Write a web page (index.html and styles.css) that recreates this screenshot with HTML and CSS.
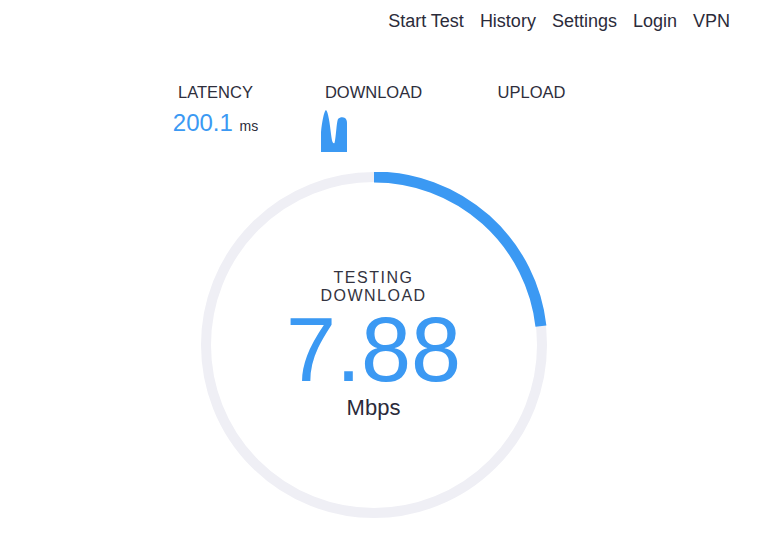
FILE: index.html
```html
<!DOCTYPE html>
<html lang="en">
<head>
    <meta charset="UTF-8">
    <meta name="viewport" content="width=device-width, initial-scale=1.0">
    <title>Speed Test</title>
    <link rel="stylesheet" href="styles.css">
</head>
<body>
    <nav class="top-nav">
        <a href="#">Start Test</a>
        <a href="#">History</a>
        <a href="#">Settings</a>
        <a href="#">Login</a>
        <a href="#">VPN</a>
    </nav>

    <main class="main">
        <div class="stats">
            <div class="stat">
                <div class="stat-title">LATENCY</div>
                <div class="stat-value">200.1 <span class="unit">ms</span></div>
            </div>
            <div class="stat">
                <div class="stat-title">DOWNLOAD</div>
                <div class="stat-chart">
                    <svg width="26" height="42" viewBox="0 0 26 42">
                        <path d="M0 42 L0 22 C1 12 3 1 5 0 C7 1 9 14 10 24 C11 32 12 34 13.5 33 C15 28 15.5 12 17 9 C19 7 22 7 24 8 C25.5 9 26 11 26 13 L26 42 Z" fill="#3b99f3"/>
                    </svg>
                </div>
            </div>
            <div class="stat">
                <div class="stat-title">UPLOAD</div>
            </div>
        </div>

        <div class="gauge">
            <svg class="gauge-ring" width="346" height="346" viewBox="0 0 346 346">
                <circle cx="173" cy="173" r="168" fill="none" stroke="#efeff5" stroke-width="10"/>
                <circle cx="173" cy="173" r="168" fill="none" stroke="#3b99f3" stroke-width="11"
                        pathLength="100" stroke-dasharray="23.2 100" transform="rotate(-90 173 173)"/>
            </svg>
            <div class="gauge-text">
                <div class="gauge-label">TESTING<br>DOWNLOAD</div>
                <div class="gauge-number">7.88</div>
                <div class="gauge-unit">Mbps</div>
            </div>
        </div>
    </main>
</body>
</html>
```

FILE: styles.css
```css
body {
    margin: 0;
    font-family: 'Liberation Sans', Arial, sans-serif;
    color: #2b2b3a;
    background-color: #fff;
}

.top-nav {
    display: flex;
    justify-content: flex-end;
    gap: 16px;
    padding: 10px 45px 0;
    font-size: 18px;
    line-height: 22px;
}

.top-nav a {
    color: #2b2b3a;
    text-decoration: none;
}

.main {
    width: 747px;
    display: flex;
    flex-direction: column;
    align-items: center;
}

.stats {
    display: grid;
    grid-template-columns: repeat(3, 158px);
    margin-top: 50px;
    height: 90px;
}

.stat {
    display: flex;
    flex-direction: column;
    align-items: center;
}

.stat-title {
    font-size: 16.5px;
    line-height: 20px;
    color: #2e2e3c;
}

.stat-value {
    margin-top: 7px;
    font-size: 24px;
    line-height: 28px;
    color: #3b99f3;
}

.stat-value .unit {
    font-size: 14px;
    color: #2b2b3a;
}

.stat-chart {
    align-self: flex-start;
    margin-top: 8px;
    padding-left: 26px;
    height: 42px;
}

.stat-chart svg {
    display: block;
}

.gauge {
    display: grid;
    width: 346px;
    height: 346px;
}

.gauge-ring,
.gauge-text {
    grid-area: 1 / 1;
}

.gauge-text {
    padding-top: 97px;
    text-align: center;
}

.gauge-label {
    font-size: 16px;
    line-height: 18px;
    letter-spacing: 1.5px;
    color: #333340;
}

.gauge-number {
    font-size: 90px;
    line-height: 90px;
    color: #3b99f3;
}

.gauge-unit {
    font-size: 22px;
    line-height: 26px;
}
```
